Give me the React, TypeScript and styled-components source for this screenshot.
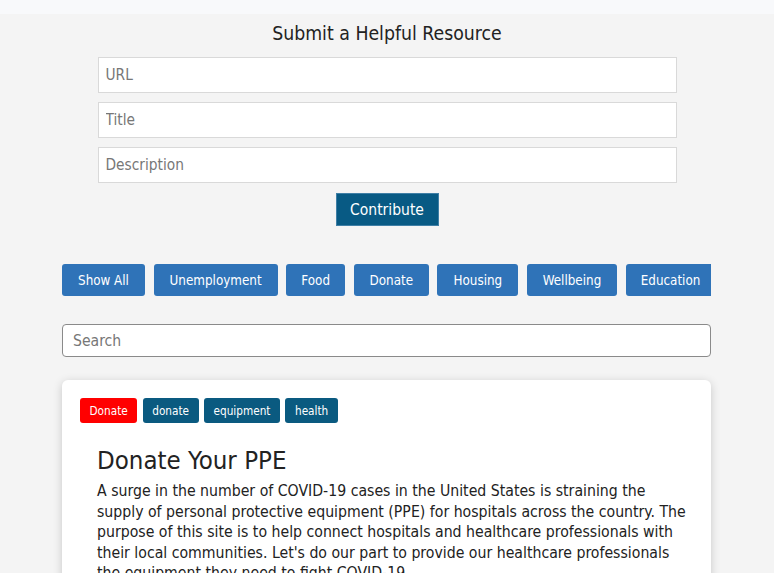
import React from "react"
import styled, { createGlobalStyle } from "styled-components"

const GlobalStyle = createGlobalStyle`
  html, body {
    margin: 0;
    padding: 0;
    background: #f4f4f4;
    font-family: "DejaVu Sans Condensed", "DejaVu Sans", Verdana, sans-serif;
    color: #222;
  }
  * {
    box-sizing: border-box;
  }
`

const TopStrip = styled.div`
  height: 14px;
  background: #f8f9fb;
`

const Page = styled.main`
  width: 650px;
  margin: 0 auto;
  padding-top: 8px;
`

const SubmitForm = styled.form`
  display: flex;
  flex-direction: column;
  align-items: center;
  gap: 9px;
`

const FormTitle = styled.h2`
  margin: 0 0 2px;
  font-size: 19.3px;
  font-weight: normal;
  line-height: 24px;
  color: #222;
`

const Field = styled.input`
  width: 579px;
  height: 36px;
  padding: 0 7px;
  border: 1px solid #d9d9d9;
  background: #fff;
  font-family: inherit;
  font-size: 15.3px;
  color: #222;
  &::placeholder {
    color: #777;
  }
`

const SubmitButton = styled.button`
  width: 103px;
  height: 33px;
  margin-top: 1px;
  border: 1px solid #3f7fa6;
  background: #085a84;
  color: #fff;
  font-family: inherit;
  font-size: 15.5px;
  cursor: pointer;
`

const Filters = styled.div`
  display: flex;
  gap: 8.6px;
  margin-top: 38px;
  width: 649px;
  overflow: hidden;
`

const FilterButton = styled.button<{ $w: number }>`
  flex: 0 0 auto;
  width: ${(p) => p.$w}px;
  height: 32px;
  border: none;
  border-radius: 3px;
  background: #2f73b8;
  color: #fff;
  font-family: inherit;
  font-size: 13.3px;
  cursor: pointer;
`

const SearchBox = styled.input`
  display: block;
  width: 649px;
  height: 33px;
  margin-top: 28px;
  padding: 0 10px;
  border: 1px solid #8a8a8a;
  border-radius: 4px;
  background: #fff;
  font-family: inherit;
  font-size: 15.6px;
  &::placeholder {
    color: #777;
  }
`

const Card = styled.article`
  margin-top: 23px;
  width: 649px;
  padding: 18px 18px 24px;
  background: #fff;
  border-radius: 6px;
  box-shadow: 0 2px 10px rgba(0, 0, 0, 0.18);
`

const Tags = styled.div`
  display: flex;
  gap: 5.5px;
`

const Tag = styled.span<{ $primary?: boolean }>`
  display: inline-flex;
  align-items: center;
  height: 25px;
  padding: 0 9.5px;
  border-radius: 3px;
  background: ${(p) => (p.$primary ? "#ff0000" : "#0a5a80")};
  color: #fff;
  font-size: 11.7px;
`

const Body = styled.div`
  padding: 0 6px 0 17px;
`

const ResourceTitle = styled.h3`
  margin: 22px 0 6px;
  font-size: 25.6px;
  font-weight: normal;
  line-height: 30px;
  color: #222;
`

const Text = styled.p`
  margin: 0;
  font-size: 15.7px;
  line-height: 20.6px;
  color: #222;
`

const filters = [
  { label: "Show All", w: 83 },
  { label: "Unemployment", w: 124 },
  { label: "Food", w: 59 },
  { label: "Donate", w: 75 },
  { label: "Housing", w: 81 },
  { label: "Wellbeing", w: 90 },
  { label: "Education", w: 90 },
]

const App: React.FC = () => {
  return (
    <>
      <GlobalStyle />
      <TopStrip />
      <Page>
        <SubmitForm onSubmit={(e) => e.preventDefault()}>
          <FormTitle>Submit a Helpful Resource</FormTitle>
          <Field placeholder="URL" />
          <Field placeholder="Title" />
          <Field placeholder="Description" />
          <SubmitButton type="submit">Contribute</SubmitButton>
        </SubmitForm>

        <Filters>
          {filters.map((f) => (
            <FilterButton key={f.label} $w={f.w}>
              {f.label}
            </FilterButton>
          ))}
        </Filters>

        <SearchBox placeholder="Search" />

        <Card>
          <Tags>
            <Tag $primary>Donate</Tag>
            <Tag>donate</Tag>
            <Tag>equipment</Tag>
            <Tag>health</Tag>
          </Tags>
          <Body>
            <ResourceTitle>Donate Your PPE</ResourceTitle>
            <Text>
              A surge in the number of COVID-19 cases in the United States is
              straining the supply of personal protective equipment (PPE) for
              hospitals across the country. The purpose of this site is to help
              connect hospitals and healthcare professionals with their local
              communities. Let's do our part to provide our healthcare
              professionals the equipment they need to fight COVID-19.
            </Text>
          </Body>
        </Card>
      </Page>
    </>
  )
}

export default App
